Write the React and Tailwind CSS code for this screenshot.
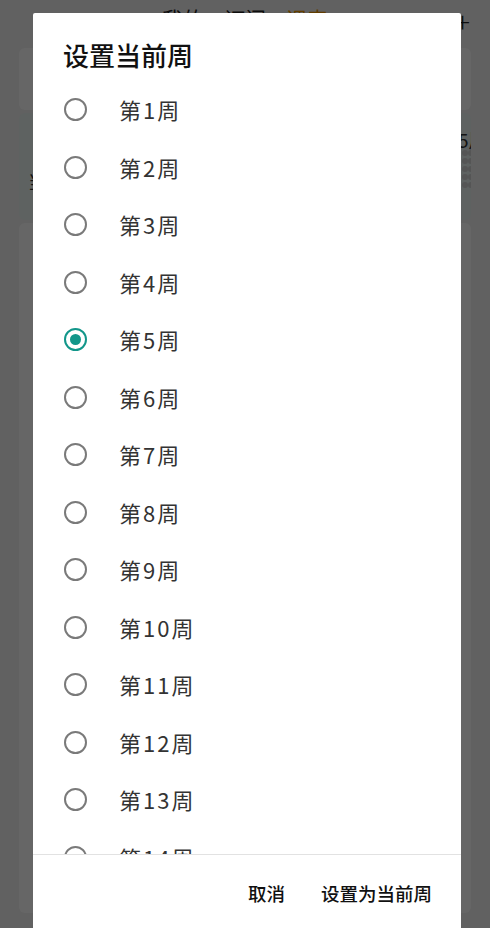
import React, { useState } from 'react';

const weeks = Array.from({ length: 20 }, (_, i) => i + 1);

function Radio({ checked }) {
  return (
    <span
      className={`flex h-[23px] w-[23px] shrink-0 items-center justify-center rounded-full border-2 ${
        checked ? 'border-[#12968a]' : 'border-[#7a7a7a]'
      }`}
    >
      {checked && <span className="h-[11px] w-[11px] rounded-full bg-[#12968a]" />}
    </span>
  );
}

export default function App() {
  const [current, setCurrent] = useState(5);

  return (
    <div
      className="relative h-[928px] w-full overflow-hidden bg-[#f2f2f2]"
      style={{ fontFamily: '"Noto Sans CJK SC", "Noto Sans", sans-serif' }}
    >
      {/* page behind the dialog */}
      <div className="relative flex h-[36px] items-center justify-center gap-[20px] pt-[2px] text-[21px] text-[#222]">
        <span>我的</span>
        <span>订阅</span>
        <span className="text-[#f39800]">课表</span>
        <span className="absolute right-[20px] top-[0px] text-[28px] font-light text-[#222]">+</span>
      </div>
      <div className="flex flex-col gap-[3px] px-[19px] pt-[12px]">
        <div className="h-[62px] rounded-[6px] bg-white" />
        <div className="relative h-[107px] overflow-hidden rounded-[6px] bg-[#eaf4f2] pl-[9px] pt-[55px] text-[18px] text-[#333]">
          当前
          <span className="absolute left-[420px] top-[13px] whitespace-nowrap text-[19px]">第5周</span>
          <div className="absolute left-[443px] top-[37px] grid grid-cols-2 gap-[2px]">
            {Array.from({ length: 10 }).map((_, i) => (
              <span key={i} className="h-[6px] w-[6px] rounded-full bg-[#d4d4d4]" />
            ))}
          </div>
        </div>
        <div className="h-[690px] rounded-[6px] bg-white" />
      </div>

      <div className="absolute inset-0 bg-black/60" />

      {/* dialog */}
      <div className="absolute left-[33px] top-[13px] flex h-[930px] w-[428px] flex-col rounded-t-[2px] bg-white">
        <div className="flex h-[68px] shrink-0 items-center pl-[30px] pt-[14px] text-[26px] font-medium text-[#111]">
          设置当前周
        </div>
        <div className="h-[773px] shrink-0 overflow-hidden">
          {weeks.map((w) => (
            <div
              key={w}
              onClick={() => setCurrent(w)}
              className="flex h-[57.5px] cursor-pointer items-center gap-[32px] pl-[31px] text-[22px] text-[#333]"
            >
              <Radio checked={current === w} />
              <span className="tracking-[2px]">第{w}周</span>
            </div>
          ))}
        </div>
        <div className="flex h-[75px] shrink-0 items-center justify-end gap-[36px] border-t border-[#e2e2e2] pt-[4px] pr-[29px] text-[18.5px] font-medium text-[#111]">
          <button>取消</button>
          <button>设置为当前周</button>
        </div>
      </div>
    </div>
  );
}
